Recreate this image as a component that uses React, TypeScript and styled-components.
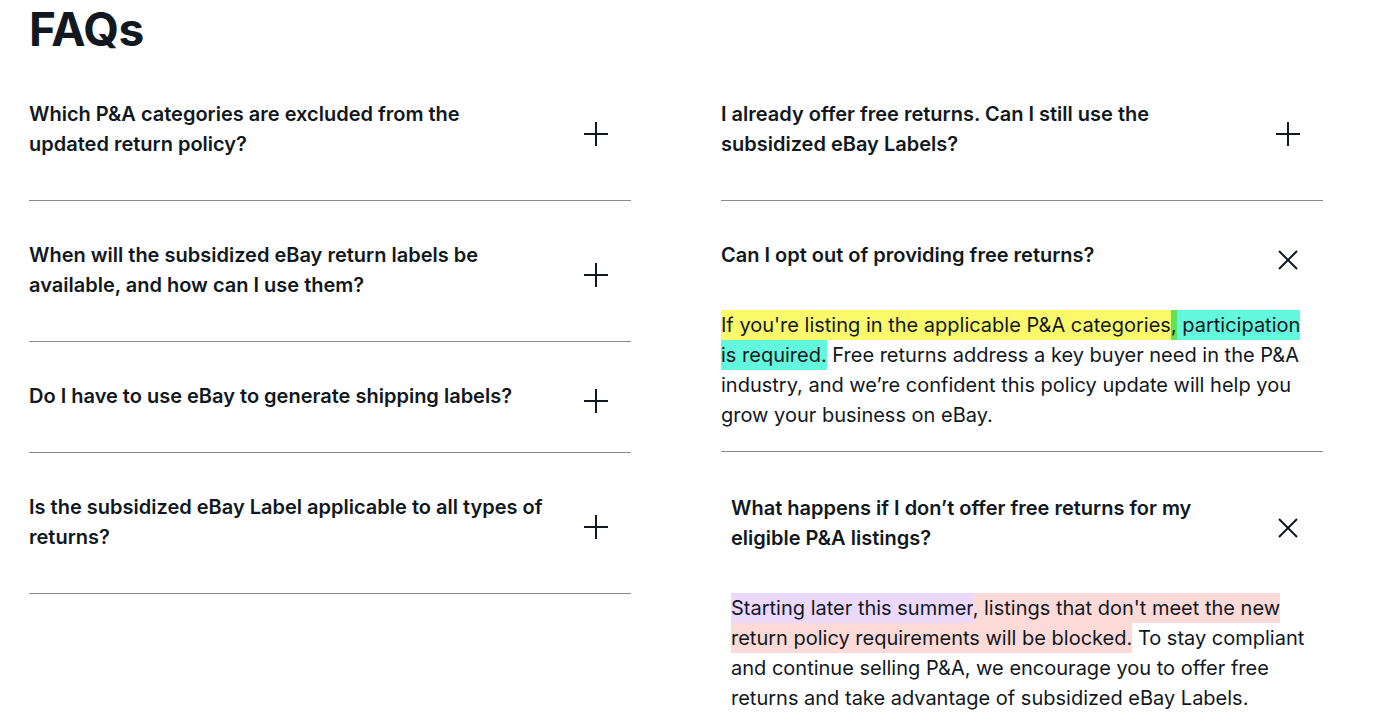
import styled, { createGlobalStyle } from 'styled-components';

const GlobalStyle = createGlobalStyle`
  body {
    margin: 0;
    background: #fff;
    font-family: Inter, 'Noto Sans', Arial, sans-serif;
    color: #111820;
  }
`;

const Page = styled.div`
  padding: 0 29px;
`;

const Title = styled.h1`
  font-size: 46px;
  font-weight: 700;
  line-height: 58px;
  margin: 0 0 2px;
  letter-spacing: -0.5px;
`;

const Columns = styled.div`
  display: grid;
  grid-template-columns: 602px 602px;
  column-gap: 90px;
  align-items: start;
`;

const Column = styled.div`
  display: flex;
  flex-direction: column;
`;

const Item = styled.div<{ $open?: boolean; $last?: boolean; $shift?: number }>`
  border-bottom: ${p => (p.$last ? 'none' : '1px solid #8a8a8a')};
  padding-top: ${p => (p.$shift ? 41 : 39)}px;
  padding-bottom: ${p => (p.$open ? 21 : 41)}px;
  margin-left: ${p => p.$shift ?? 0}px;
`;

const QuestionRow = styled.div`
  display: flex;
  align-items: center;
  justify-content: space-between;
  gap: 40px;
`;

const Question = styled.div`
  font-size: 20px;
  font-weight: 600;
  line-height: 30px;
  max-width: 526px;
`;

const IconBox = styled.span`
  flex: 0 0 auto;
  width: 26px;
  height: 26px;
  margin-right: 22px;
  transform: translateY(5px);
  display: flex;
  align-items: center;
  justify-content: center;
`;

const Answer = styled.p`
  margin: 40px 0 0;
  font-size: 20px;
  line-height: 30px;
  font-weight: 400;
  max-width: 594px;
`;

const Mark = styled.span<{ $bg: string }>`
  background: ${p => p.$bg};
  padding: 3px 0;
  -webkit-box-decoration-break: clone;
  box-decoration-break: clone;
`;

const PlusIcon = () => (
  <svg width="26" height="26" viewBox="0 0 26 26">
    <path d="M13 1v24M1 13h24" stroke="#111820" strokeWidth="2" fill="none" />
  </svg>
);

const CloseIcon = () => (
  <svg width="22" height="22" viewBox="0 0 22 22">
    <path d="M2 2l18 18M20 2L2 20" stroke="#111820" strokeWidth="2" fill="none" />
  </svg>
);

const leftItems = [
  'Which P&A categories are excluded from the updated return policy?',
  'When will the subsidized eBay return labels be available, and how can I use them?',
  'Do I have to use eBay to generate shipping labels?',
  'Is the subsidized eBay Label applicable to all types of returns?',
];

export default function App() {
  return (
    <Page>
      <GlobalStyle />
      <Title>FAQs</Title>
      <Columns>
        <Column>
          {leftItems.map(q => (
            <Item key={q}>
              <QuestionRow>
                <Question>{q}</Question>
                <IconBox>
                  <PlusIcon />
                </IconBox>
              </QuestionRow>
            </Item>
          ))}
        </Column>
        <Column>
          <Item>
            <QuestionRow>
              <Question>I already offer free returns. Can I still use the subsidized eBay Labels?</Question>
              <IconBox>
                <PlusIcon />
              </IconBox>
            </QuestionRow>
          </Item>
          <Item $open>
            <QuestionRow>
              <Question>Can I opt out of providing free returns?</Question>
              <IconBox>
                <CloseIcon />
              </IconBox>
            </QuestionRow>
            <Answer>
              <Mark $bg="#fbf86c">If you're listing in the applicable P&amp;A categories</Mark>
              <Mark $bg="#5fe35a">,</Mark>
              <Mark $bg="#63f7dd"> participation is required.</Mark> Free returns address a key
              buyer need in the P&amp;A industry, and we’re confident this policy update will
              help you grow your business on eBay.
            </Answer>
          </Item>
          <Item $open $last $shift={10}>
            <QuestionRow>
              <Question>What happens if I don’t offer free returns for my eligible P&amp;A listings?</Question>
              <IconBox>
                <CloseIcon />
              </IconBox>
            </QuestionRow>
            <Answer>
              <Mark $bg="#ecd8fb">Starting later this summer</Mark>
              <Mark $bg="#fcdad8">, listings that don't meet the new return policy requirements will be blocked.</Mark>{' '}
              To stay compliant and continue selling P&amp;A, we encourage you to offer free returns
              and take advantage of subsidized eBay Labels.
            </Answer>
          </Item>
        </Column>
      </Columns>
    </Page>
  );
}
